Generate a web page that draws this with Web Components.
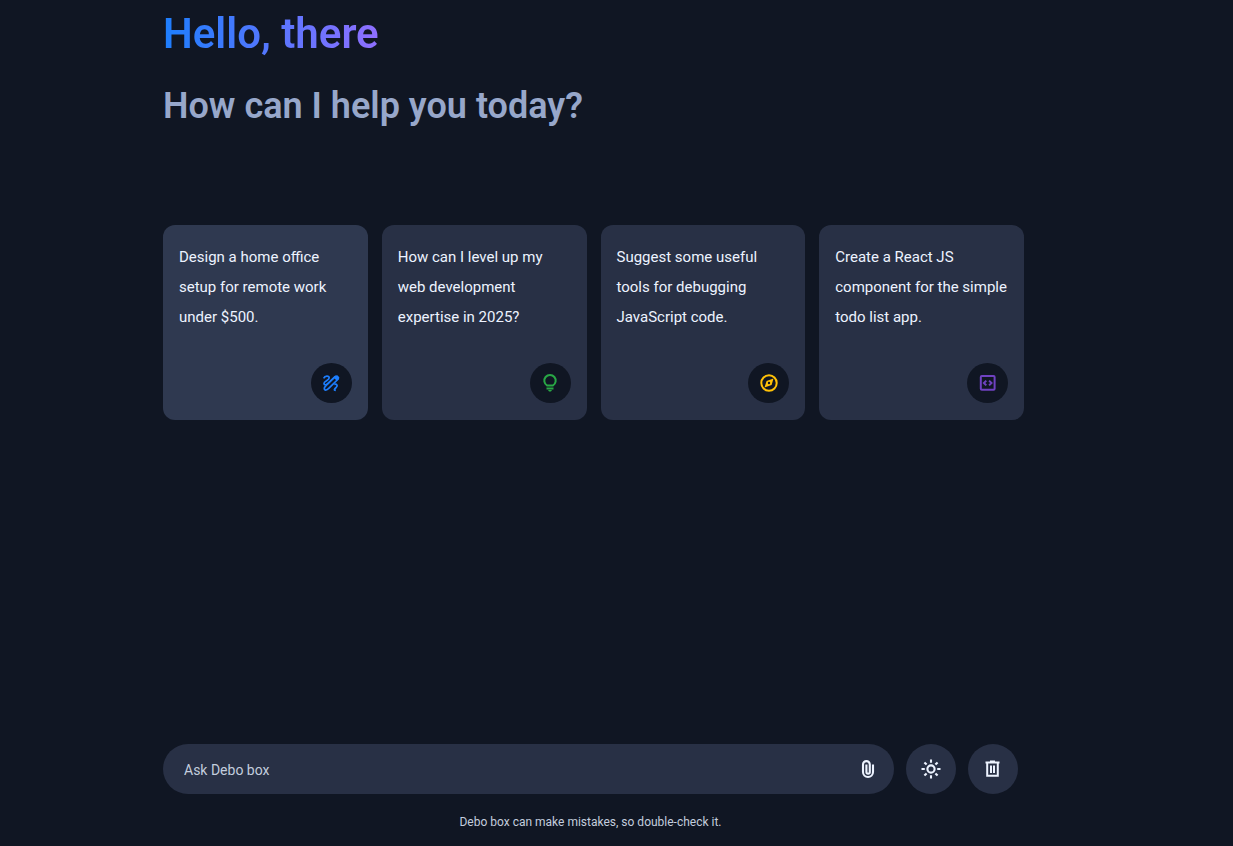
<!DOCTYPE html>
<html lang="en">
<head>
<meta charset="UTF-8">
<meta name="viewport" content="width=device-width, initial-scale=1.0">
<title>Debo box</title>
<style>
    :root {
        --text: #edf3ff;
        --subheading: #97a7ca;
        --placeholder: #c3cdde;
        --primary: #101623;
        --secondary: #283045;
        --secondary-hover: #2f3950;
    }

    body {
        margin: 0;
        background: var(--primary);
        color: var(--text);
        font-family: Roboto, "Noto Sans", sans-serif;
    }
</style>
</head>
<body>
<chat-app>
    <app-header slot="header">
        <span slot="title">Hello, there</span>
        How can I help you today?
    </app-header>
    <suggestion-card icon="draw" color="#1d7efd" active>Design a home office setup for remote work under $500.</suggestion-card>
    <suggestion-card icon="bulb" color="#28a745">How can I level up my web development expertise in 2025?</suggestion-card>
    <suggestion-card icon="compass" color="#ffc107">Suggest some useful tools for debugging JavaScript code.</suggestion-card>
    <suggestion-card icon="code" color="#6f42c1">Create a React JS component for the simple todo list app.</suggestion-card>
    <prompt-bar slot="footer" placeholder="Ask Debo box">Debo box can make mistakes, so double-check it.</prompt-bar>
</chat-app>

<script>
const icons = {
    draw: `<g stroke-width="1.700"><path d="M2.600 5.300C4 2.600 8 2.300 8.200 4.800C8.400 7.300 3 8 3 10.300C3 12.300 5 12.200 7 10.300L14 3.500" />
           <path d="M17.200 6L8 15.200C5.500 17.700 3.300 17.500 3.300 15.500C3.300 13.800 5 12.600 6.500 11.200L14.500 3.500" />
           <path d="M13.300 11.500C15.500 10.300 17 12.500 15.500 14C14 15.500 12 17.300 14.800 17.300" /></g>
           <path d="M14 2.500L16.300 2.300L18.300 4.200L18 6.300L15.800 7.800L12.700 4.700Z" fill="currentColor" stroke="none" />`,
    bulb: `<path d="M7.200 12.600A5.700 5.700 0 1 1 12.800 12.600Z" />
           <path d="M6.500 15.500H13.500" />
           <path d="M8 17H12L11 18.600H9Z" fill="currentColor" stroke="none" />`,
    compass: `<circle cx="10" cy="10" r="7.700" />
           <path fill="currentColor" stroke="none" fill-rule="evenodd" d="M14.500 5.500L12.600 12L5.500 14.500L7.600 8ZM10 8.800A1.200 1.200 0 1 0 10 11.200A1.200 1.200 0 0 0 10 8.800Z" />`,
    code: `<rect x="2.800" y="3" width="13.800" height="13.800" rx="1" />
           <path d="M8.300 7.600L5.900 10L8.300 12.400M11.100 7.600L13.500 10L11.100 12.400" />`,
    clip: `<path stroke-width="2.100" d="M15 5.500V13A5 5 0 0 1 5 13V5.500A3.400 3.400 0 0 1 11.800 5.500V13A1.700 1.700 0 0 1 8.400 13V5.500" />`,
    sun: `<circle cx="10" cy="10" r="3.600" stroke-width="2.100" />
           <path stroke-width="2.100" d="M10 .5V3.800M10 16.200V19.500M.5 10H3.800M16.200 10H19.500M3.400 3.400L5.600 5.600M14.400 14.400L16.600 16.600M3.400 16.600L5.600 14.400M14.400 5.600L16.600 3.400" />`,
    trash: `<path d="M2.500 3.500H16.500M7 2.500H12M4.200 4V16.800H14.800V4M8 6.500V14M11 6.500V14" />`
};

class AppIcon extends HTMLElement {
    constructor() {
        super();
        this.shadow = this.attachShadow({mode:"open"});
    }

    connectedCallback(){
        this.shadow.innerHTML = `
        <style>
            :host {
                display: block;
                width: 20px;
                height: 20px;
            }

            svg {
                display: block;
                fill: none;
                stroke: currentColor;
                stroke-width: 2;
            }
        </style>
            <svg width="20" height="20" viewBox="0 0 20 20" aria-hidden="true">${icons[this.getAttribute("name")]}</svg>
        `;
    }
}

class ChatApp extends HTMLElement {
    constructor() {
        super();
        this.shadow = this.attachShadow({mode:"open"});
    }

    connectedCallback(){
        this.shadow.innerHTML = `
        <style>
            :host {
                display: grid;
                grid-template-columns: 163fr 861fr 209fr;
                min-height: 100vh;
            }

            main {
                grid-column: 2;
                display: flex;
                flex-direction: column;
                min-width: 0;
            }

            .suggestions {
                display: grid;
                grid-template-columns: repeat(4, 1fr);
                gap: 14px;
                margin-top: 89px;
            }

            slot[name="footer"] {
                display: block;
                margin-top: auto;
            }

            @media (max-width: 900px) {
                .suggestions {
                    grid-template-columns: repeat(2, 1fr);
                }
            }
        </style>
            <main>
                <slot name="header"></slot>
                <div class="suggestions"><slot></slot></div>
                <slot name="footer"></slot>
            </main>
        `;
    }
}

class AppHeader extends HTMLElement {
    constructor() {
        super();
        this.shadow = this.attachShadow({mode:"open"});
    }

    connectedCallback(){
        this.shadow.innerHTML = `
        <style>
            :host {
                display: block;
            }

            h1, h2 {
                margin: 0;
                font-weight: 600;
            }

            h1 {
                width: fit-content;
                font-size: 42px;
                line-height: 68px;
                color: transparent;
                background: linear-gradient(to right, #1d7efd, #8f6fff);
                background-clip: text;
                -webkit-background-clip: text;
            }

            h2 {
                margin-top: 8px;
                font-size: 36px;
                line-height: 60px;
                color: var(--subheading);
            }
        </style>
            <h1><slot name="title"></slot></h1>
            <h2><slot></slot></h2>
        `;
    }
}

class SuggestionCard extends HTMLElement {
    constructor() {
        super();
        this.shadow = this.attachShadow({mode:"open"});
    }

    connectedCallback(){
        this.shadow.innerHTML = `
        <style>
            :host {
                display: block;
            }

            button {
                display: flex;
                flex-direction: column;
                justify-content: space-between;
                gap: 31px;
                width: 100%;
                height: 100%;
                padding: 17px 16px;
                border: 0;
                border-radius: 12px;
                background: var(--secondary);
                color: inherit;
                font: inherit;
                font-size: 15px;
                line-height: 30px;
                text-align: left;
                cursor: pointer;
            }

            button:hover, :host([active]) button {
                background: var(--secondary-hover);
            }

            .badge {
                display: grid;
                place-items: center;
                align-self: flex-end;
                width: 41px;
                height: 40px;
                border-radius: 50%;
                background: var(--primary);
                color: ${this.getAttribute("color")};
            }
        </style>
            <button type="button">
                <span><slot></slot></span>
                <span class="badge"><app-icon name="${this.getAttribute("icon")}"></app-icon></span>
            </button>
        `;
    }
}

class PromptBar extends HTMLElement {
    constructor() {
        super();
        this.shadow = this.attachShadow({mode:"open"});
    }

    connectedCallback(){
        this.shadow.innerHTML = `
        <style>
            :host {
                display: block;
                padding-right: 6px;
            }

            form {
                display: flex;
                gap: 12px;
            }

            .field {
                display: flex;
                flex: 1;
                align-items: center;
                min-width: 0;
                height: 50px;
                padding-right: 1px;
                border-radius: 25px;
                background: var(--secondary);
            }

            input {
                flex: 1;
                min-width: 0;
                height: 100%;
                padding: 2px 0 0 21px;
                border: 0;
                outline: 0;
                box-sizing: border-box;
                background: none;
                color: inherit;
                font: inherit;
                font-size: 14px;
            }

            input::placeholder {
                color: var(--placeholder);
            }

            button {
                display: grid;
                place-items: center;
                flex: none;
                width: 50px;
                height: 50px;
                padding: 0;
                border: 0;
                border-radius: 50%;
                background: var(--secondary);
                color: inherit;
                cursor: pointer;
            }

            .field button {
                background: none;
            }

            p {
                margin: 0;
                padding: 15px 0 10px;
                font-size: 12px;
                line-height: 27px;
                text-align: center;
                color: var(--placeholder);
            }
        </style>
            <form>
                <div class="field">
                    <input type="text" aria-label="${this.getAttribute("placeholder")}" placeholder="${this.getAttribute("placeholder")}">
                    <button type="button" aria-label="Attach file"><app-icon name="clip"></app-icon></button>
                </div>
                <button type="button" aria-label="Toggle theme"><app-icon name="sun"></app-icon></button>
                <button type="button" aria-label="Delete chats"><app-icon name="trash"></app-icon></button>
            </form>
            <p><slot></slot></p>
        `;
    }
}

customElements.define("app-icon", AppIcon);
customElements.define("chat-app", ChatApp);
customElements.define("app-header", AppHeader);
customElements.define("suggestion-card", SuggestionCard);
customElements.define("prompt-bar", PromptBar);
</script>
</body>
</html>
